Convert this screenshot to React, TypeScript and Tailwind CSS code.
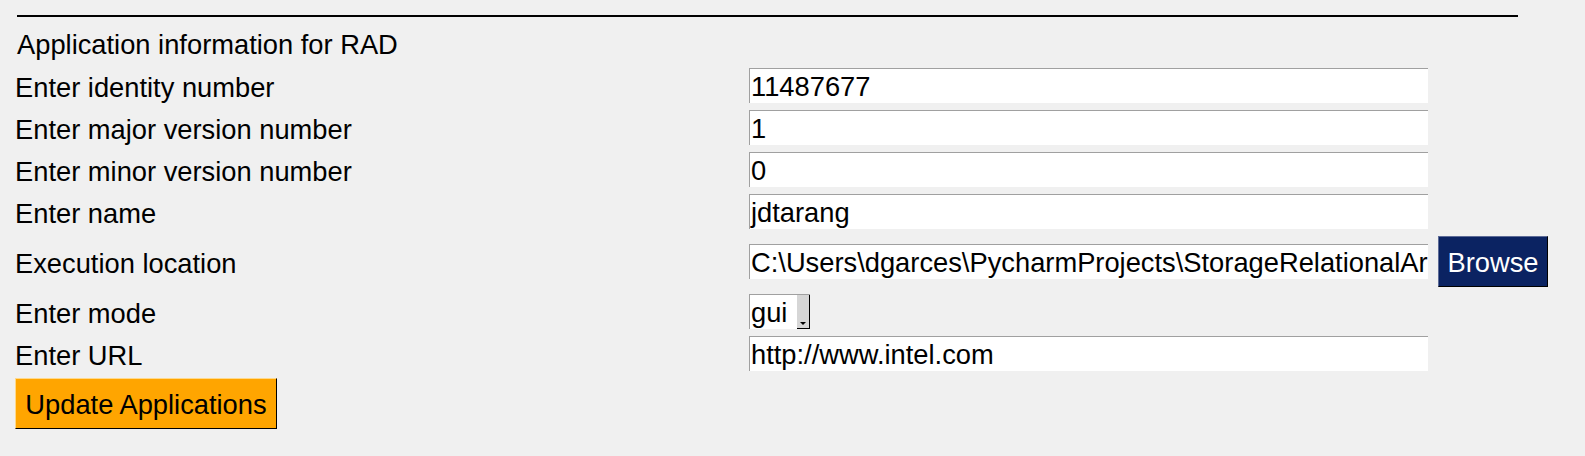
import React from 'react'

type Field = {
  label: string
  value: string
  kind?: 'text' | 'path' | 'select'
}

const fields: Field[] = [
  { label: 'Enter identity number', value: '11487677' },
  { label: 'Enter major version number', value: '1' },
  { label: 'Enter minor version number', value: '0' },
  { label: 'Enter name', value: 'jdtarang' },
  {
    label: 'Execution location',
    value: 'C:\\Users\\dgarces\\PycharmProjects\\StorageRelationalArchitecture',
    kind: 'path',
  },
  { label: 'Enter mode', value: 'gui', kind: 'select' },
  { label: 'Enter URL', value: 'http://www.intel.com' },
]

const TextBox = ({ value }: { value: string }) => (
  <div className="h-[35px] w-[679px] bg-white border-t border-l border-[#a0a0a0] pl-[1px] pt-[1px] leading-[33px] overflow-hidden whitespace-nowrap self-center">
    {value}
  </div>
)

const OptionBox = ({ value }: { value: string }) => (
  <div className="flex h-[35px] w-[61px] bg-white border-t border-l border-[#a0a0a0] self-center">
    <span className="flex-1 pl-[1px] pt-[1px] leading-[33px] overflow-hidden whitespace-nowrap">{value}</span>
    <span className="relative w-[13px] h-[34px] bg-[#d6d6d6] border-r border-b border-black">
      {/* little down arrow of the option menu */}
      <svg
        className="absolute left-[3px] bottom-[3px]"
        width="6"
        height="3"
        viewBox="0 0 6 3"
      >
        <polygon points="0,0 6,0 3,3" fill="#000" />
      </svg>
    </span>
  </div>
)

export default function App() {
  return (
    <div className="min-h-screen bg-[#f0f0f0] text-black text-[27.3px] font-['Liberation_Sans',Arial,sans-serif]">
      <div className="pt-[15px] pl-[17px]">
        <div className="h-[2px] w-[1501px] bg-black" />
      </div>

      <div className="mt-[12px] pl-[17px] leading-[31px]">Application information for RAD</div>

      {/* Form grid */}
      <div className="mt-[8px] pl-[15px] grid grid-cols-[724px_679px_auto] gap-x-[10px] gap-y-[7px] items-center">
        {fields.map((f) => (
          <React.Fragment key={f.label}>
            <div className="pt-[4px] leading-[31px] whitespace-nowrap">{f.label}</div>
            {f.kind === 'select' ? <OptionBox value={f.value} /> : <TextBox value={f.value} />}
            {f.kind === 'path' ? (
              <button className="h-[51px] w-[110px] bg-[#0b2362] text-white leading-[31px] pt-[2px] border-t border-l border-[#5d6b97] border-r border-b border-r-black border-b-black">
                Browse
              </button>
            ) : (
              <div />
            )}
          </React.Fragment>
        ))}
      </div>

      <div className="mt-[7px] pl-[15px]">
        <button className="h-[51px] w-[262px] bg-[#ffa500] text-black leading-[31px] pt-[2px] border-t border-l border-[#ffd98a] border-r border-b border-r-black border-b-black">
          Update Applications
        </button>
      </div>
    </div>
  )
}
